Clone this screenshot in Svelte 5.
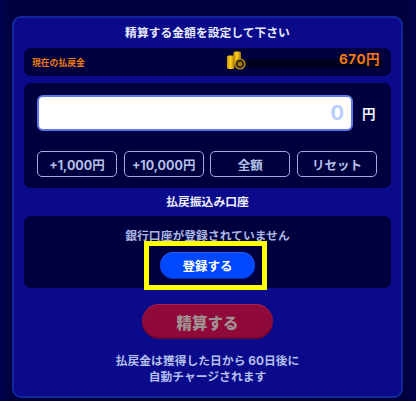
<script>
  const quick = ['+1,000円', '+10,000円', '全額', 'リセット'];
</script>

<div class="page">
  <section class="panel">
    <h2 class="title">精算する金額を設定して下さい</h2>
    <div class="balance">
      <span class="balance-label">現在の払戻金</span>
      <div class="meter">
        <svg class="coins" width="19" height="19" viewBox="0 0 19 19" aria-hidden="true">
          <defs>
            <linearGradient id="gold" x1="0" x2="1" y1="0" y2="0">
              <stop offset="0" stop-color="#c98f00" />
              <stop offset="0.45" stop-color="#ffd21f" />
              <stop offset="1" stop-color="#a87400" />
            </linearGradient>
          </defs>
          <rect x="6.5" y="0.5" width="7.5" height="13" rx="1.5" fill="url(#gold)" />
          <rect x="0" y="4.5" width="7.5" height="13.5" rx="1.5" fill="url(#gold)" />
          <circle cx="13" cy="13" r="5" fill="#3a2c08" stroke="#c79a20" stroke-width="1.2" />
          <circle cx="13" cy="13" r="2.2" fill="#a87c12" />
        </svg>
        <b class="amount">670円</b>
      </div>
    </div>

    <div class="card entry">
      <div class="input-row">
        <div class="input">0</div>
        <span class="unit">円</span>
      </div>
      <div class="quick">
        {#each quick as q}
          <button class="quick-btn">{q}</button>
        {/each}
      </div>
    </div>

    <h3 class="subtitle">払戻振込み口座</h3>

    <div class="card account">
      <p class="notice">銀行口座が登録されていません</p>
      <div class="register-wrap">
        <button class="register">登録する</button>
        <span class="highlight"></span>
      </div>
    </div>

    <button class="settle" disabled>精算する</button>

    <p class="note">払戻金は獲得した日から 60日後に<br />自動チャージされます</p>
  </section>
</div>

<style>
  :global(body) {
    margin: 0;
    background: #00003f;
  }
  .page {
    width: 416px;
    height: 401px;
    box-sizing: border-box;
    padding: 16px 13px 0 12px;
    background: linear-gradient(90deg, #00004c 0, #00003e 12px, #00003e 404px, #00004c 416px);
    font-family: "Inter", "Noto Sans CJK JP", sans-serif;
    overflow: hidden;
  }
  .panel {
    height: 382px;
    box-sizing: border-box;
    border: 2px solid #10289c;
    border-radius: 9px;
    background: #0a0a8a;
    padding: 0 10px;
    display: flex;
    flex-direction: column;
    align-items: stretch;
  }
  .title {
    margin: 0;
    height: 30px;
    line-height: 31px;
    text-align: center;
    font-size: 11.8px;
    font-weight: 700;
    color: #e8ebff;
  }
  .balance {
    height: 28px;
    border-radius: 7px;
    background: #00003f;
    display: flex;
    align-items: center;
    justify-content: space-between;
    padding: 0 8px 0 8px;
  }
  .balance-label {
    font-size: 8.8px;
    font-weight: 700;
    color: #e87a10;
  }
  .meter {
    position: relative;
    width: 146px;
    height: 9px;
    margin-top: 3px;
    border-radius: 4px;
    background: #00001f;
  }
  .coins {
    position: absolute;
    left: -10px;
    top: -8.5px;
  }
  .amount {
    position: absolute;
    right: 3px;
    top: -8px;
    font-size: 13.5px;
    line-height: 16px;
    letter-spacing: 0.5px;
    font-weight: 700;
    color: #f57a0a;
    white-space: nowrap;
  }
  .card {
    background: #00003f;
    border-radius: 7px;
  }
  .entry {
    margin-top: 7px;
    height: 105px;
    box-sizing: border-box;
    padding: 12px 13px 0;
  }
  .input-row {
    display: flex;
    align-items: center;
  }
  .input {
    width: 316px;
    height: 36px;
    box-sizing: border-box;
    border: 2px solid #5f78e8;
    border-radius: 6px;
    background: #fff;
    text-align: right;
    padding-right: 7px;
    font-size: 20px;
    line-height: 32px;
    font-weight: 700;
    color: #b9ccff;
  }
  .unit {
    margin-left: 9px;
    font-size: 13.5px;
    font-weight: 700;
    color: #f2f4ff;
  }
  .quick {
    margin-top: 20px;
    display: flex;
    gap: 6.67px;
  }
  .quick-btn {
    flex: 0 0 80px;
    height: 26px;
    padding: 0;
    box-sizing: border-box;
    border: 1.5px solid #a0aedb;
    border-radius: 5px;
    background: transparent;
    color: #b4c0e8;
    font-family: inherit;
    font-size: 12.5px;
    font-weight: 700;
    white-space: nowrap;
  }
  .subtitle {
    margin: 0;
    height: 28px;
    line-height: 28px;
    text-align: center;
    font-size: 11.8px;
    font-weight: 700;
    color: #eef0ff;
  }
  .account {
    height: 72px;
    display: flex;
    flex-direction: column;
    align-items: center;
  }
  .notice {
    margin: 12px 0 0;
    font-size: 11.8px;
    line-height: 16px;
    font-weight: 700;
    color: #aab6e2;
  }
  .register-wrap {
    position: relative;
    margin-top: 8px;
  }
  .register {
    display: block;
    width: 95px;
    height: 27px;
    padding: 0;
    border: none;
    border-radius: 14px;
    background: #0048ff;
    box-shadow: inset 0 1px 0 #2a5cf0, inset 0 -1px 0 #0630b8;
    color: #fff;
    font-family: inherit;
    font-size: 12.5px;
    font-weight: 700;
  }
  .highlight {
    position: absolute;
    left: -16px;
    top: -11px;
    width: 123px;
    height: 49px;
    box-sizing: border-box;
    border: 5px solid #ffff00;
    pointer-events: none;
  }
  .settle {
    align-self: center;
    margin-top: 16px;
    width: 131px;
    height: 35px;
    padding: 0;
    border: none;
    border-radius: 18px;
    background: #8f0a3a;
    box-shadow: inset 0 1px 0 #a32050, inset 0 -2px 0 #6e0630;
    color: #a09090;
    font-family: inherit;
    font-size: 15.5px;
    font-weight: 900;
  }
  .note {
    margin: 14px 0 0;
    text-align: center;
    font-size: 11.8px;
    line-height: 16px;
    font-weight: 700;
    color: #b4bfec;
  }
</style>
